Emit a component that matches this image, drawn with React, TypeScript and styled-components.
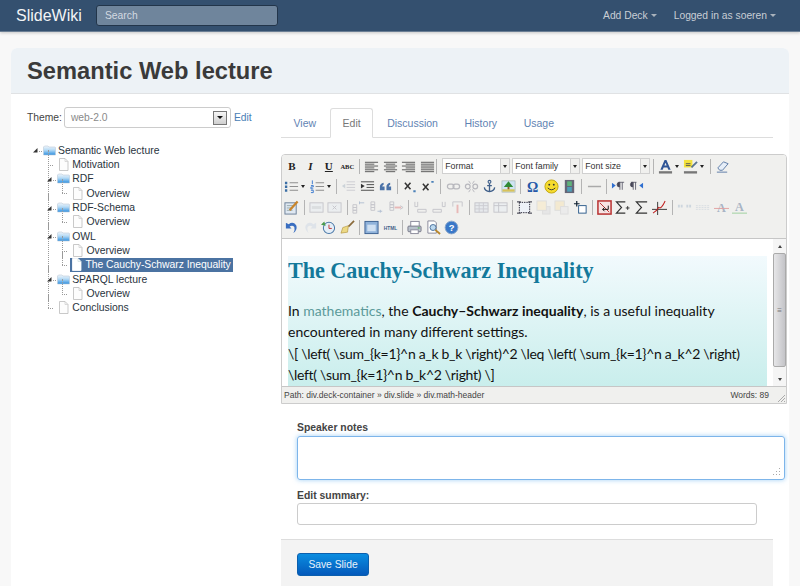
import React from 'react'
import styled, { createGlobalStyle } from 'styled-components'

const GlobalStyle = createGlobalStyle`
  html, body {
    margin: 0;
    height: 586px;
    overflow: hidden;
    background: #f8f8f8;
    font-family: "Liberation Sans", Arial, sans-serif;
    color: #333;
  }
`

const Nav = styled.div`
  height: 31px;
  background: #34506f;
  border-bottom: 1px solid #6b7f95;
  box-shadow: 0 1px 3px rgba(0, 0, 0, 0.2);
  display: flex;
  align-items: center;
  padding: 0 24px 0 16px;
`
const Brand = styled.div`
  font-size: 16px;
  color: #f2f4f6;
  width: 80px;
`
const Search = styled.div`
  width: 182px;
  height: 21px;
  box-sizing: border-box;
  background: #6f859c;
  border: 1px solid #22354a;
  border-radius: 3px;
  color: #d3dae1;
  font-size: 10.3px;
  line-height: 19px;
  padding-left: 8px;
`
const NavRight = styled.div`
  margin-left: auto;
  display: flex;
  gap: 17px;
`
const NavLink = styled.div`
  font-size: 10.3px;
  color: #c8ced5;
  display: flex;
  align-items: center;
  gap: 3px;
  &::after {
    content: '';
    border-left: 3px solid transparent;
    border-right: 3px solid transparent;
    border-top: 3px solid #a9b2bc;
  }
`
const Card = styled.div`
  margin: 16px 11px 0;
  height: 538px;
  background: #fff;
  border-radius: 6px 6px 0 0;
  overflow: hidden;
`
const CardHead = styled.div`
  background: #edf2f6;
  border-bottom: 1px solid #e0e2e4;
  display: flex;
  align-items: center;
  padding: 1px 0 0 16px;
  height: 44px;
  font-size: 23.7px;
  font-weight: bold;
  color: #3a3a3a;
`
const CardBody = styled.div`
  display: grid;
  grid-template-columns: 270px 508px;
`
const Side = styled.div`
  padding: 13px 0 0 16px;
`
const ThemeRow = styled.div`
  display: flex;
  align-items: center;
  font-size: 10.3px;
  color: #444;
`
const ThemeSelect = styled.div`
  width: 167px;
  height: 21px;
  margin: 0 3px 0 2px;
  border: 1px solid #ccc;
  border-radius: 3px;
  color: #8a8a8a;
  display: flex;
  align-items: center;
  justify-content: space-between;
  padding: 0 3px 0 6px;
  box-sizing: border-box;
`
const SelectArrow = styled.span`
  width: 14px;
  height: 14px;
  box-sizing: border-box;
  border: 1px solid #777;
  background: linear-gradient(#f6f6f6, #cfcfcf);
  display: flex;
  align-items: center;
  justify-content: center;
  &::after {
    content: '';
    border-left: 3px solid transparent;
    border-right: 3px solid transparent;
    border-top: 3px solid #111;
  }
`
const LinkText = styled.a`
  color: #4a7eb5;
`
const TreeRoot = styled.ul`
  list-style: none;
  margin: 15px 0 0 5px;
  padding: 0;
  font-size: 10.4px;
  color: #2a3440;
`
const Branch = styled.ul`
  list-style: none;
  margin: 0;
  padding: 0 0 0 14.2px;
`
const Node = styled.li<{ $root?: boolean }>`
  position: relative;
  &::before {
    content: '';
    display: ${p => (p.$root ? 'none' : 'block')};
    position: absolute;
    left: 1.5px;
    top: -7px;
    bottom: 0;
    border-left: 1px dotted #9a9a9a;
  }
  &:last-child::before {
    bottom: auto;
    height: 14px;
  }
`
const Row = styled.div`
  height: 14.35px;
  display: flex;
  align-items: center;
  white-space: nowrap;
`
const Toggle = styled.span`
  width: 10px;
  flex: none;
  height: 14px;
  margin-right: 1px;
  position: relative;
  z-index: 1;
  display: flex;
  align-items: center;
`
const NodeIcon = styled.svg`
  flex: none;
  width: 13px;
  height: 13px;
  margin-right: 2px;
`
const Label = styled.span<{ $selected?: boolean }>`
  color: ${p => (p.$selected ? '#fff' : 'inherit')};
`
const SelectedWrap = styled.span`
  display: flex;
  align-items: center;
  height: 14.35px;
  background: #4b73a2;
  padding: 0 2px 0 0;
  margin-left: -1px;
  letter-spacing: -0.05px;
`
const Main = styled.div`
  padding-top: 14px;
`
const Tabs = styled.div`
  width: 492px;
  height: 29px;
  border-bottom: 1px solid #ddd;
  display: flex;
  font-size: 10.5px;
`
const Tab = styled.div<{ $active?: boolean }>`
  height: 30px;
  padding: 0 11.5px;
  margin-right: 1.5px;
  line-height: 28px;
  color: ${p => (p.$active ? '#777' : '#5f83b3')};
  border: 1px solid ${p => (p.$active ? '#ddd' : 'transparent')};
  border-bottom-color: ${p => (p.$active ? '#fff' : 'transparent')};
  border-radius: 3px 3px 0 0;
  background: ${p => (p.$active ? '#fff' : 'transparent')};
  box-sizing: border-box;
`
const Editor = styled.div`
  width: 504px;
  margin-top: 16px;
  border: 1px solid #ccc;
  border-radius: 4px 4px 0 0;
  overflow: hidden;
`
const Toolbar = styled.div`
  height: 84px;
  background: #f0f0ee;
  border-bottom: 1px solid #c6c6c6;
  padding: 1px 0 0 0.75px;
  box-sizing: border-box;
`
const ToolRow = styled.div`
  height: 20.5px;
  display: flex;
  align-items: center;
`
const ToolButton = styled.span<{ $faded?: boolean }>`
  width: 18.45px;
  height: 18px;
  flex: none;
  display: flex;
  align-items: center;
  justify-content: center;
  opacity: ${p => (p.$faded ? 0.4 : 1)};
  svg {
    display: block;
  }
`
const Glyph = styled.span<{ $italic?: boolean; $under?: boolean; $size?: number }>`
  font-family: "Liberation Serif", serif;
  font-weight: bold;
  font-size: ${p => p.$size ?? 11}px;
  color: #222;
  font-style: ${p => (p.$italic ? 'italic' : 'normal')};
  text-decoration: ${p => (p.$under ? 'underline' : 'none')};
`
const Sep = styled.span<{ $narrow?: boolean }>`
  width: ${p => (p.$narrow ? 4 : 6)}px;
  flex: none;
  height: 15px;
  display: flex;
  justify-content: ${p => (p.$narrow ? 'flex-start' : 'center')};
  &::after {
    content: '';
    width: 1px;
    background: #b4b4b4;
  }
`
const Caret = styled.span`
  width: 7px;
  flex: none;
  display: flex;
  &::after {
    content: '';
    border-left: 2.5px solid transparent;
    border-right: 2.5px solid transparent;
    border-top: 3px solid #222;
  }
`
const Combo = styled.span`
  width: 68px;
  height: 16px;
  flex: none;
  margin-left: 2px;
  box-sizing: border-box;
  border: 1px solid #d0d0d0;
  display: flex;
  font-size: 8.8px;
  line-height: 14px;
  color: #333;
  background: #fff;
`
const ComboText = styled.span`
  flex: 1;
  padding-left: 2px;
`
const ComboArrow = styled.span`
  width: 8px;
  background: #f0f0ee;
  border-left: 1px solid #d0d0d0;
  display: flex;
  align-items: center;
  justify-content: center;
  &::after {
    content: '';
    border-left: 2.5px solid transparent;
    border-right: 2.5px solid transparent;
    border-top: 3px solid #222;
  }
`
const ContentArea = styled.div`
  height: 147px;
  display: flex;
  background: #fff;
`
const Page = styled.div`
  flex: 1;
  padding: 17px 6px 0 6px;
  overflow: hidden;
`
const Slide = styled.div`
  height: 130px;
  overflow: hidden;
  background: linear-gradient(#f2fafd, #c9eeec);
  font-family: Lato, sans-serif;
  font-size: 14px;
  line-height: 21.5px;
  color: #111;
  white-space: nowrap;
`
const SlideTitle = styled.h1`
  margin: 0 0 17px;
  padding-top: 2.5px;
  font-family: "Liberation Serif", serif;
  font-size: 22.1px;
  line-height: 24px;
  font-weight: bold;
  color: #13799b;
`
const SlideLink = styled.span`
  color: #5c9a9a;
`
const MathLine = styled.span`
  letter-spacing: -0.31px;
`
const Scrollbar = styled.div`
  width: 13px;
  background: #f5f5f5;
  display: flex;
  flex-direction: column;
`
const ScrollArrow = styled.div<{ $up?: boolean }>`
  height: 14px;
  display: flex;
  align-items: center;
  justify-content: center;
  &::after {
    content: '';
    border-left: 2.5px solid transparent;
    border-right: 2.5px solid transparent;
    ${p => (p.$up ? 'border-bottom: 3px solid #444;' : 'border-top: 3px solid #444;')}
  }
`
const ScrollThumb = styled.div`
  flex: 1;
  border: 1px solid #aaa;
  border-radius: 2px;
  background: linear-gradient(90deg, #e6e6e8, #c4c4c8);
  display: flex;
  align-items: center;
  justify-content: center;
  color: #777;
  font-size: 8px;
  margin: 0 0 5px;
`
const StatusBar = styled.div`
  height: 17px;
  background: #f0f0ee;
  border-top: 1px solid #c6c6c6;
  box-sizing: border-box;
  display: flex;
  align-items: center;
  font-size: 8.5px;
  color: #444;
  padding: 0 0 0 2px;
`
const StatusWords = styled.span`
  margin-left: auto;
  margin-right: 6px;
`
const Grip = styled.svg`
  width: 11px;
  height: 11px;
  align-self: flex-end;
`
const Form = styled.div`
  padding: 17px 0 0 16px;
`
const FieldLabel = styled.div`
  font-size: 10.4px;
  font-weight: bold;
  color: #444;
  line-height: 13px;
`
const NotesBox = styled.div`
  width: 488px;
  height: 44px;
  margin-top: 2px;
  border: 1px solid #7db5ea;
  border-radius: 3px;
  box-shadow: 0 0 5px rgba(82, 168, 236, 0.55);
  display: flex;
  align-items: flex-end;
  justify-content: flex-end;
  padding: 0 3px 3px 0;
  box-sizing: border-box;
`
const SummaryLabel = styled(FieldLabel)`
  margin-top: 9px;
`
const SummaryInput = styled.div`
  width: 460px;
  height: 22px;
  margin-top: 0.5px;
  border: 1px solid #ccc;
  border-radius: 3px;
  box-sizing: border-box;
`
const FormFooter = styled.div`
  width: 492px;
  margin-top: 14px;
  height: 48px;
  background: #f3f3f3;
  border-top: 1px solid #ddd;
  padding: 13px 0 0 16px;
  box-sizing: border-box;
`
const SaveButton = styled.div`
  width: 72px;
  height: 23px;
  background: linear-gradient(#0a8de0, #0459bb);
  border: 1px solid #0b5fae;
  border-radius: 3px;
  box-sizing: border-box;
  color: #e8f2fb;
  font-size: 10.3px;
  line-height: 21px;
  text-align: center;
`

const Folder = () => (
  <NodeIcon viewBox="0 0 13 13">
    <defs>
      <linearGradient id="folderFill" x1="0" y1="0" x2="0" y2="1">
        <stop offset="0" stopColor="#f0f6fb" />
        <stop offset="0.45" stopColor="#b5daf5" />
        <stop offset="1" stopColor="#2d8fe0" />
      </linearGradient>
    </defs>
    <path d="M0.5 3 L1.5 2 H5 L6 3 H12 Q12.5 3 12.5 4 V11 H0.5Z" fill="url(#folderFill)" stroke="#bccbd8" strokeWidth="0.6" />
  </NodeIcon>
)
const Doc = ({ white }: { white?: boolean }) => (
  <NodeIcon viewBox="0 0 13 13">
    <path d="M2.5 0.5 H8 L11 3.5 V12.5 H2.5Z" fill={white ? '#fff' : '#fdfdfd'} stroke={white ? '#fff' : '#bbb'} strokeWidth="0.8" />
    <path d="M8 0.5 V3.5 H11" fill="none" stroke={white ? '#cdd' : '#ccc'} strokeWidth="0.7" />
  </NodeIcon>
)
const Expander = () => (
  <svg width="10" height="10" viewBox="0 0 10 10">
    <path d="M1 7.5 L5.5 3 V7.5Z" fill="#333" />
    <path d="M7 6.5 H10" stroke="#999" strokeDasharray="1 1" />
  </svg>
)
const Leaf = () => (
  <svg width="10" height="10" viewBox="0 0 10 10">
    <path d="M2 5.5 H8" stroke="#999" strokeDasharray="1 1" />
  </svg>
)

const lines = (rows: [number, number][], color: string) => (
  <path d={rows.map(([x, w], i) => `M${x} ${3.5 + i * 2}h${w}`).join('')} stroke={color} fill="none" />
)
const Ico = ({ children }: { children: React.ReactNode }) => (
  <svg width="15" height="15" viewBox="0 0 16 16">{children}</svg>
)

const icons: Record<string, React.ReactNode> = {
  left: lines([[1, 14], [1, 10], [1, 14], [1, 10], [1, 14], [1, 10]], '#555'),
  center: lines([[1, 14], [3, 10], [1, 14], [3, 10], [1, 14], [3, 10]], '#555'),
  right: lines([[1, 14], [5, 10], [1, 14], [5, 10], [1, 14], [5, 10]], '#555'),
  justify: lines([[1, 14], [1, 14], [1, 14], [1, 14], [1, 14], [1, 14]], '#555'),
  textcolor: <><path d="M2.5 11.5 L7 1 H9 L13.5 11.5 H11 L10 9 H6 L5 11.5Z M6.8 7 H9.2 L8 4Z" fill="#2f5597" fillRule="evenodd" /><rect x="1" y="13" width="14" height="2.5" fill="#777" /></>,
  highlight: <><rect x="1" y="1" width="9" height="8" fill="#f3e23c" /><path d="M9 9 L15 3" stroke="#5a7590" strokeWidth="2" /><path d="M3 5h5M3 7h5" stroke="#555" /><rect x="1" y="13" width="14" height="2.5" fill="#777" /></>,
  eraser: <><path d="M3 9.5 L9 3 L14 5 L8 12 H5Z" fill="#e6eef8" stroke="#5b7aa5" /><path d="M2 14 H13" stroke="#5b7aa5" /></>,
  bullist: <><path d="M1 3h2.5v2.5H1z M1 7h2.5v2.5H1z M1 11h2.5v2.5H1z" fill="#3a6ea5" /><path d="M6 4h9M6 8h9M6 12h9" stroke="#888" /></>,
  numlist: <><path d="M2.5 1.5v4M1 7h2.5v1.5H1v2h2.5M1 12h2.5v2.5H1" stroke="#3a7ad0" fill="none" /><path d="M6 4h9M6 8h9M6 12h9" stroke="#888" /></>,
  outdent: <><path d="M6 3h9M6 6h9M6 9h9M6 12h9" stroke="#99a" /><path d="M4.5 5 L1 7.5 L4.5 10Z" fill="#9ab" /></>,
  indent: <><path d="M1 3h14M7 6h8M7 9h8M1 12h14" stroke="#444" /><path d="M1 5 L5 7.5 L1 10Z" fill="#333" /></>,
  quote: <path d="M2 12 V8 Q2 5 6 4 V6 Q4.5 6.5 4.5 8 H7 V12Z M9 12 V8 Q9 5 13 4 V6 Q11.5 6.5 11.5 8 H14 V12Z" fill="#4a72a8" />,
  sub: <><path d="M2 4 L8 11 M8 4 L2 11" stroke="#333" strokeWidth="1.6" /><path d="M11 12h2.5v2H11z" fill="#4a80b8" /></>,
  sup: <><path d="M2 5 L8 12 M8 5 L2 12" stroke="#333" strokeWidth="1.6" /><path d="M11 2h2.5v2H11z" fill="#4a80b8" /></>,
  link: <><rect x="1.5" y="5.5" width="7" height="5" rx="2.5" fill="none" stroke="#667" strokeWidth="1.3" /><rect x="7.5" y="5.5" width="7" height="5" rx="2.5" fill="none" stroke="#667" strokeWidth="1.3" /></>,
  unlink: <><rect x="1.5" y="5.5" width="5" height="5" rx="2.5" fill="none" stroke="#667" strokeWidth="1.3" /><rect x="9.5" y="5.5" width="5" height="5" rx="2.5" fill="none" stroke="#667" strokeWidth="1.3" /><path d="M5 2l2 3M11 2l-2 3M5 14l2-3M11 14l-2-3" stroke="#667" /></>,
  anchor: <><circle cx="8" cy="3" r="1.5" fill="none" stroke="#3f5f8a" strokeWidth="1.2" /><path d="M8 4.5V13.5M5.5 7h5M2.5 9 Q3 13 8 13.5 Q13 13 13.5 9" fill="none" stroke="#3f5f8a" strokeWidth="1.4" /></>,
  image: <><rect x="1" y="2" width="14" height="12" fill="#cfe4f2" stroke="#9aa" strokeWidth="0.6" /><path d="M8 2.5 L13 8.5 H3Z" fill="#2f8a35" /><rect x="7" y="8.5" width="2" height="3" fill="#8a5a22" /><rect x="1.5" y="11" width="13" height="2.5" fill="#d8c25a" /></>,
  omega: <text x="8" y="13.5" textAnchor="middle" fontFamily="Liberation Serif, serif" fontWeight="bold" fontSize="15" fill="#2458a8">Ω</text>,
  smile: <><circle cx="8" cy="8" r="7" fill="#f6dc2e" stroke="#c0a414" /><circle cx="5.6" cy="6" r="1" fill="#333" /><circle cx="10.4" cy="6" r="1" fill="#333" /><path d="M4 9.5 Q8 13.5 12 9.5" fill="none" stroke="#333" /></>,
  film: <><rect x="3" y="1" width="10" height="14" fill="#667" /><rect x="5.5" y="2.5" width="5" height="5" fill="#5fb37a" /><rect x="5.5" y="8.5" width="5" height="5" fill="#4f9fb8" /></>,
  hr: <path d="M1 8h14" stroke="#aaa" strokeWidth="1.4" />,
  ltr: <><path d="M1 4 L5 7 L1 10Z" fill="#2f6fd0" /><path d="M8 3.5h6M9 3.5q-2.5 0 -2.5 2.5t2.5 2.5zM9.5 3.5v8M12 3.5v8" stroke="#445" fill="#445" strokeWidth="0.8" /></>,
  rtl: <><path d="M15 4 L11 7 L15 10Z" fill="#2f6fd0" /><path d="M2 3.5h6M4 3.5q-2.5 0 -2.5 2.5t2.5 2.5zM4.5 3.5v8M7 3.5v8" stroke="#445" fill="#445" strokeWidth="0.8" /></>,
  edit: <><rect x="1" y="3" width="12" height="12" fill="#dfe8f2" stroke="#6a7f96" /><path d="M3 6h7M3 8.5h6M3 11h6" stroke="#9aa" /><path d="M6 11 L14.5 1.5" stroke="#c9852a" strokeWidth="2.4" /></>,
  tablerow: <><rect x="1" y="3" width="14" height="10" fill="#e6ecf3" stroke="#889" /><rect x="3" y="6.5" width="10" height="3" fill="#bcc4cc" /></>,
  tabledel: <><rect x="1" y="3" width="14" height="10" fill="#e6ecf3" stroke="#889" /><path d="M6 6l4 4M10 6l-4 4" stroke="#889" /></>,
  rowbefore: <><path d="M1 5h4v3H1zM1 8h4v3H1zM1 11h4v3H1z" fill="none" stroke="#889" /><path d="M8 3h5M8 1.5v3" stroke="#57a" /></>,
  rowafter: <><path d="M1 2h4v3H1zM1 5h4v3H1zM1 8h4v3H1z" fill="none" stroke="#889" /><path d="M8 12h5M11 10.5v3" stroke="#57a" /></>,
  rowdel: <><path d="M1 2h4v3H1zM1 5h4v3H1zM1 8h4v3H1z" fill="none" stroke="#889" /><path d="M6 8h7" stroke="#d66" strokeWidth="2" /><path d="M12 6l3 2-3 2" fill="none" stroke="#889" /></>,
  colbefore: <><path d="M2 2v5h3M5 2v5M5 13h9v-3h-9z" fill="none" stroke="#889" /></>,
  colafter: <><path d="M11 2v5h3M14 2v5M1 13h9v-3H1z" fill="none" stroke="#889" /></>,
  coldel: <><path d="M8 5v9" stroke="#d66" strokeWidth="2" /><path d="M3 2h10M3 2v5M13 2v5" stroke="#889" /></>,
  tablecells: <><rect x="1" y="3" width="14" height="10" fill="#d8e0ea" stroke="#889" /><path d="M1 6h14M1 9.5h14M5.5 3v10M10 3v10" stroke="#99a" /></>,
  tablemerge: <><rect x="1" y="3" width="14" height="10" fill="#e6ecf3" stroke="#889" /><path d="M6 3v10M1 6h14" stroke="#889" /></>,
  dashbox: <><rect x="2.5" y="2.5" width="11" height="11" fill="#eef2f8" stroke="#223" strokeDasharray="1.5 1" /><path d="M0 2h4M12 2h4M0 14h4M12 14h4" stroke="#223" /></>,
  layerfwd: <><rect x="7" y="7" width="8" height="8" fill="#e6e6e6" stroke="#ddd" /><rect x="1" y="1" width="10" height="10" fill="#f5ecd6" stroke="#ddd" /></>,
  layerback: <><rect x="1" y="1" width="10" height="10" fill="#f3e9d0" stroke="#ddd" /><rect x="7" y="7" width="8" height="8" fill="#ebebeb" stroke="#ddd" /></>,
  layernew: <><rect x="6" y="6" width="8" height="8" fill="#fff" stroke="#2a5a8a" /><path d="M1 4h6M4 1v6" stroke="#123" strokeWidth="1.3" /></>,
  redbox: <><rect x="1" y="1" width="14" height="14" fill="#f6e3e3" stroke="#b83030" strokeWidth="1.6" /><path d="M3 3 L13 13" stroke="#b83030" /><path d="M12 6v4H6M8 8l-2 2 2 2" fill="none" stroke="#111" /></>,
  sumplus: <><path d="M11 2H1.5 L7 8 L1.5 14H11" fill="none" stroke="#333" strokeWidth="1.2" /><path d="M11.5 8.5h4M13.5 6.5v4" stroke="#333" /></>,
  sum: <path d="M14 2H2.5 L8 8 L2.5 14H14" fill="none" stroke="#333" strokeWidth="1.2" />,
  graph: <><path d="M0 10h16M6 2v14" stroke="#333" /><path d="M1 14 Q5 12 7 8 Q10 10 14 1" fill="none" stroke="#c02020" strokeWidth="1.1" /></>,
  cite: <path d="M1 5h2v3H1zM4 5h2v3H4zM10 5h2v3h-2zM13 5h2v3h-2z" fill="#9ab0c8" />,
  abbr: <path d="M1 6h14M1 8h14M1 10h14" stroke="#b8c4d2" strokeDasharray="2 1" />,
  acronymDel: <><text x="8" y="12.5" textAnchor="middle" fontFamily="Liberation Serif, serif" fontSize="13" fontWeight="bold" fill="#a8b4c4">A</text><path d="M0 9h16" stroke="#e0a0a0" /></>,
  acronymIns: <><text x="8" y="12" textAnchor="middle" fontFamily="Liberation Serif, serif" fontSize="13" fontWeight="bold" fill="#a8b4c4">A</text><path d="M0 14h16" stroke="#9ccf9c" /></>,
  undo: <path d="M2 3v6h6L6 7 Q9 5 11 7.5 Q12 10 10 14 Q15 10 13 5.5 Q9.5 1 5 4.5Z" fill="#3a6ec0" />,
  redo: <path d="M14 3v6H8l2-2 Q7 5 5 7.5 Q4 10 6 14 Q1 10 3 5.5 Q6.5 1 11 4.5Z" fill="#c5d2e4" />,
  restore: <><circle cx="8.5" cy="8.5" r="6" fill="#e4eef7" stroke="#4a78a8" strokeWidth="1.1" /><path d="M8.5 5v4h3" stroke="#c03030" fill="none" /><path d="M0 5 L3.5 1.5 L5 6Z" fill="#4a9a4a" /></>,
  broom: <><path d="M15 1 L9 7" stroke="#8a6a3a" strokeWidth="1.8" /><path d="M9 6 L3 8 L1 14 L8 13Z" fill="#ecd985" stroke="#a98a30" strokeWidth="0.6" /></>,
  window: <><rect x="1" y="1.5" width="14" height="13" fill="#8fb2da" stroke="#3a5f90" /><rect x="3.5" y="5" width="9" height="7" fill="#cfe0f2" /></>,
  html: <text x="8" y="10.5" textAnchor="middle" fontFamily="Liberation Sans, sans-serif" fontWeight="bold" fontSize="5.2" fill="#3f5f8a">HTML</text>,
  print: <><rect x="4" y="1.5" width="9" height="6" fill="#fff" stroke="#889" /><rect x="1" y="6.5" width="14" height="6" rx="1" fill="#b9c2cc" stroke="#778" /><rect x="4" y="10.5" width="8" height="4" fill="#fff" stroke="#889" /><rect x="11.5" y="8" width="2" height="1" fill="#3a3" /></>,
  preview: <><path d="M2 1h7l2 2V14H2Z" fill="#fff" stroke="#889" /><circle cx="7.5" cy="8" r="3.2" fill="#bcd9f0" stroke="#4a6f9a" /><path d="M10 10.5 L15 15" stroke="#b8862a" strokeWidth="2" /></>,
  help: <><circle cx="8" cy="8" r="6.8" fill="#3a78c8" stroke="#8aa8cc" /><text x="8" y="11.8" textAnchor="middle" fontFamily="Liberation Sans, sans-serif" fontWeight="bold" fontSize="10" fill="#fff">?</text></>,
}

const faded = new Set([
  'outdent', 'link', 'unlink', 'tablerow', 'tabledel', 'rowbefore', 'rowafter', 'rowdel',
  'colbefore', 'colafter', 'coldel', 'tablecells', 'tablemerge', 'redo',
  'cite', 'abbr',
])
const rows: string[][] = [
  ['sep', 'left', 'center', 'right', 'justify', 'narrow', 'combo:Format', 'combo:Font family', 'combo:Font size', 'sep', 'textcolor', 'caret', 'highlight', 'caret', 'sep', 'eraser'],
  ['bullist', 'caret', 'numlist', 'caret', 'sep', 'outdent', 'indent', 'quote', 'sep', 'sub', 'sup', 'sep', 'link', 'unlink', 'anchor', 'image', 'sep', 'omega', 'smile', 'film', 'sep', 'hr', 'sep', 'ltr', 'rtl'],
  ['edit', 'sep', 'tablerow', 'tabledel', 'sep', 'rowbefore', 'rowafter', 'rowdel', 'sep', 'colbefore', 'colafter', 'coldel', 'sep', 'tablecells', 'tablemerge', 'sep', 'dashbox', 'layerfwd', 'layerback', 'layernew', 'sep', 'redbox', 'sumplus', 'sum', 'graph', 'sep', 'cite', 'abbr', 'acronymDel', 'acronymIns'],
  ['undo', 'redo', 'restore', 'broom', 'sep', 'window', 'html', 'sep', 'print', 'preview', 'help'],
]

function ToolItem({ item }: { item: string }) {
  if (item === 'sep') return <Sep />
  if (item === 'narrow') return <Sep $narrow />
  if (item === 'caret') return <Caret />
  if (item.startsWith('combo:')) {
    return (
      <Combo>
        <ComboText>{item.slice(6)}</ComboText>
        <ComboArrow />
      </Combo>
    )
  }
  return (
    <ToolButton $faded={faded.has(item)}>
      <Ico>{icons[item]}</Ico>
    </ToolButton>
  )
}

function EditorToolbar() {
  return (
    <Toolbar>
      {rows.map((row, i) => (
        <ToolRow key={i}>
          {i === 0 && (
            <>
              <ToolButton><Glyph>B</Glyph></ToolButton>
              <ToolButton><Glyph $italic>I</Glyph></ToolButton>
              <ToolButton><Glyph $under>U</Glyph></ToolButton>
              <ToolButton><Glyph $size={6.5}>ABC</Glyph></ToolButton>
            </>
          )}
          {row.map((item, j) => (
            <ToolItem key={j} item={item} />
          ))}
        </ToolRow>
      ))}
    </Toolbar>
  )
}

function DeckTree() {
  return (
    <TreeRoot>
      <Node $root>
        <Row><Toggle><Expander /></Toggle><Folder /><Label>Semantic Web lecture</Label></Row>
        <Branch>
          <Node><Row><Toggle><Leaf /></Toggle><Doc /><Label>Motivation</Label></Row></Node>
          <Node>
            <Row><Toggle><Expander /></Toggle><Folder /><Label>RDF</Label></Row>
            <Branch>
              <Node><Row><Toggle><Leaf /></Toggle><Doc /><Label>Overview</Label></Row></Node>
            </Branch>
          </Node>
          <Node>
            <Row><Toggle><Expander /></Toggle><Folder /><Label>RDF-Schema</Label></Row>
            <Branch>
              <Node><Row><Toggle><Leaf /></Toggle><Doc /><Label>Overview</Label></Row></Node>
            </Branch>
          </Node>
          <Node>
            <Row><Toggle><Expander /></Toggle><Folder /><Label>OWL</Label></Row>
            <Branch>
              <Node><Row><Toggle><Leaf /></Toggle><Doc /><Label>Overview</Label></Row></Node>
              <Node>
                <Row>
                  <Toggle><Leaf /></Toggle>
                  <SelectedWrap><Doc white /><Label $selected>The Cauchy-Schwarz Inequality</Label></SelectedWrap>
                </Row>
              </Node>
            </Branch>
          </Node>
          <Node>
            <Row><Toggle><Expander /></Toggle><Folder /><Label>SPARQL lecture</Label></Row>
            <Branch>
              <Node><Row><Toggle><Leaf /></Toggle><Doc /><Label>Overview</Label></Row></Node>
            </Branch>
          </Node>
          <Node><Row><Toggle><Leaf /></Toggle><Doc /><Label>Conclusions</Label></Row></Node>
        </Branch>
      </Node>
    </TreeRoot>
  )
}

export default function App() {
  return (
    <>
      <GlobalStyle />
      <Nav>
        <Brand>SlideWiki</Brand>
        <Search>Search</Search>
        <NavRight>
          <NavLink>Add Deck</NavLink>
          <NavLink>Logged in as soeren</NavLink>
        </NavRight>
      </Nav>
      <Card>
        <CardHead>Semantic Web lecture</CardHead>
        <CardBody>
          <Side>
            <ThemeRow>
              Theme:
              <ThemeSelect>web-2.0<SelectArrow /></ThemeSelect>
              <LinkText>Edit</LinkText>
            </ThemeRow>
            <DeckTree />
          </Side>
          <Main>
            <Tabs>
              <Tab>View</Tab>
              <Tab $active>Edit</Tab>
              <Tab>Discussion</Tab>
              <Tab>History</Tab>
              <Tab>Usage</Tab>
            </Tabs>
            <Editor>
              <EditorToolbar />
              <ContentArea>
                <Page>
                  <Slide>
                    <SlideTitle>The Cauchy-Schwarz Inequality</SlideTitle>
                    In <SlideLink>mathematics</SlideLink>, the <b>Cauchy–Schwarz inequality</b>, is a useful inequality
                    <br />
                    encountered in many different settings.
                    <br />
                    <MathLine>{'\\[ \\left( \\sum_{k=1}^n a_k b_k \\right)^2 \\leq \\left( \\sum_{k=1}^n a_k^2 \\right)'}</MathLine>
                    <br />
                    <MathLine>{'\\left( \\sum_{k=1}^n b_k^2 \\right) \\]'}</MathLine>
                  </Slide>
                </Page>
                <Scrollbar>
                  <ScrollArrow $up />
                  <ScrollThumb>≡</ScrollThumb>
                  <ScrollArrow />
                </Scrollbar>
              </ContentArea>
              <StatusBar>
                <span>Path: div.deck-container » div.slide » div.math-header</span>
                <StatusWords>Words: 89</StatusWords>
                <Grip viewBox="0 0 11 11">
                  <path d="M10 3 L3 10 M10 6 L6 10 M10 9 L9 10" stroke="#999" strokeWidth="0.8" />
                </Grip>
              </StatusBar>
            </Editor>
            <Form>
              <FieldLabel>Speaker notes</FieldLabel>
              <NotesBox>
                <svg width="9" height="9" viewBox="0 0 9 9">
                  <path d="M7 1h1v1H7zM7 4h1v1H7zM4 4h1v1H4zM7 7h1v1H7zM4 7h1v1H4zM1 7h1v1H1z" fill="#aaa" />
                </svg>
              </NotesBox>
              <SummaryLabel>Edit summary:</SummaryLabel>
              <SummaryInput />
            </Form>
            <FormFooter><SaveButton>Save Slide</SaveButton></FormFooter>
          </Main>
        </CardBody>
      </Card>
    </>
  )
}
